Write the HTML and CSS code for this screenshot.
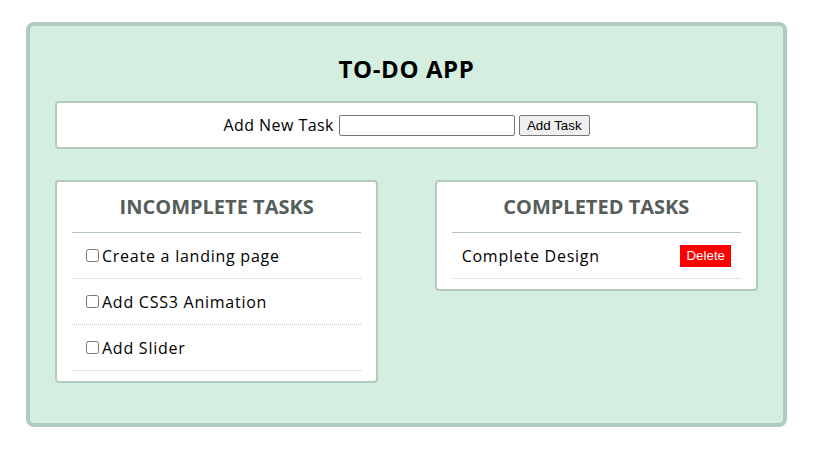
FILE: index.html
```html
<!DOCTYPE html>
<html lang="en">
<head>
<meta charset="utf-8">
<title>To-Do App</title>
<link rel="stylesheet" href="styles.css">
</head>
<body>
<div class="app">
  <h1 class="app-title">TO-DO APP</h1>
  <div class="add-bar">
    <label class="add-label" for="new-task">Add New Task</label>
    <input class="add-input" id="new-task" type="text">
    <button class="add-btn" type="button">Add Task</button>
  </div>
  <div class="lists">
    <section class="card">
      <h2 class="card-title">INCOMPLETE TASKS</h2>
      <ul class="task-list">
        <li class="task"><input type="checkbox" class="task-check"><span class="task-text">Create a landing page</span></li>
        <li class="task"><input type="checkbox" class="task-check"><span class="task-text">Add CSS3 Animation</span></li>
        <li class="task"><input type="checkbox" class="task-check"><span class="task-text">Add Slider</span></li>
      </ul>
    </section>
    <section class="card">
      <h2 class="card-title">COMPLETED TASKS</h2>
      <ul class="task-list">
        <li class="task task-done"><span class="task-text">Complete Design</span><button class="delete-btn" type="button">Delete</button></li>
      </ul>
    </section>
  </div>
</div>
</body>
</html>
```
FILE: styles.css
```css
* { box-sizing: border-box; }
body {
  margin: 0;
  background: #fff;
  font-family: "Open Sans", "DejaVu Sans", sans-serif;
  color: #000;
}
.app {
  width: 761px;
  margin: 22px auto 0;
  background: #d4eee0;
  border: 4px solid #b3cbbd;
  border-radius: 8px;
  padding: 25px 25px 40px;
}
.app-title {
  margin: 0 0 14px;
  text-align: center;
  font-size: 24px;
  letter-spacing: 0.6px;
  line-height: 36px;
  font-weight: 700;
}
.add-bar {
  height: 48px;
  background: #fff;
  border: 2px solid #b3cbbd;
  border-radius: 4px;
  display: flex;
  align-items: center;
  justify-content: center;
  font-size: 16px;
}
.add-label { margin-right: 5px; letter-spacing: 0.45px; }
.add-input {
  width: 176px;
  height: 21px;
  margin: 0 4px 0 0;
  border: 1px solid #767676;
  border-radius: 2px;
  padding: 1px 2px;
  font-family: "Liberation Sans", Arial, sans-serif;
  font-size: 13.33px;
}
.add-btn {
  height: 21px;
  margin: 0;
  padding: 1px 7px;
  font-family: "Liberation Sans", Arial, sans-serif;
  font-size: 13.33px;
  background: #efefef;
  border: 1px solid #767676;
  border-radius: 2px;
  color: #000;
}
.lists {
  margin-top: 31px;
  display: flex;
  justify-content: space-between;
  align-items: flex-start;
}
.card {
  width: 46%;
  background: #fff;
  border: 2px solid #b3cbbd;
  border-radius: 4px;
  padding: 0 15px 10px;
}
.card-title {
  margin: 0;
  padding: 10px 0 10px;
  border-bottom: 1px solid #b3c4bd;
  text-align: center;
  font-size: 20px;
  line-height: 30px;
  font-weight: 700;
  color: #555e59;
}
.task-list {
  list-style: none;
  margin: 0;
  padding: 0;
}
.task {
  display: flex;
  align-items: center;
  height: 46px;
  padding: 0 10px;
  border-bottom: 1px dotted #c8c8c8;
  font-size: 16px;
  letter-spacing: 0.75px;
}
.task-check {
  width: 13px;
  height: 13px;
  margin: 0 3px 0 4px;
}
.task-done { justify-content: space-between; }
.delete-btn {
  height: 22px;
  padding: 0 6px;
  border: none;
  background: #ff0000;
  color: #fff;
  font-family: "Liberation Sans", Arial, sans-serif;
  font-size: 13.33px;
  letter-spacing: 0;
}
```
